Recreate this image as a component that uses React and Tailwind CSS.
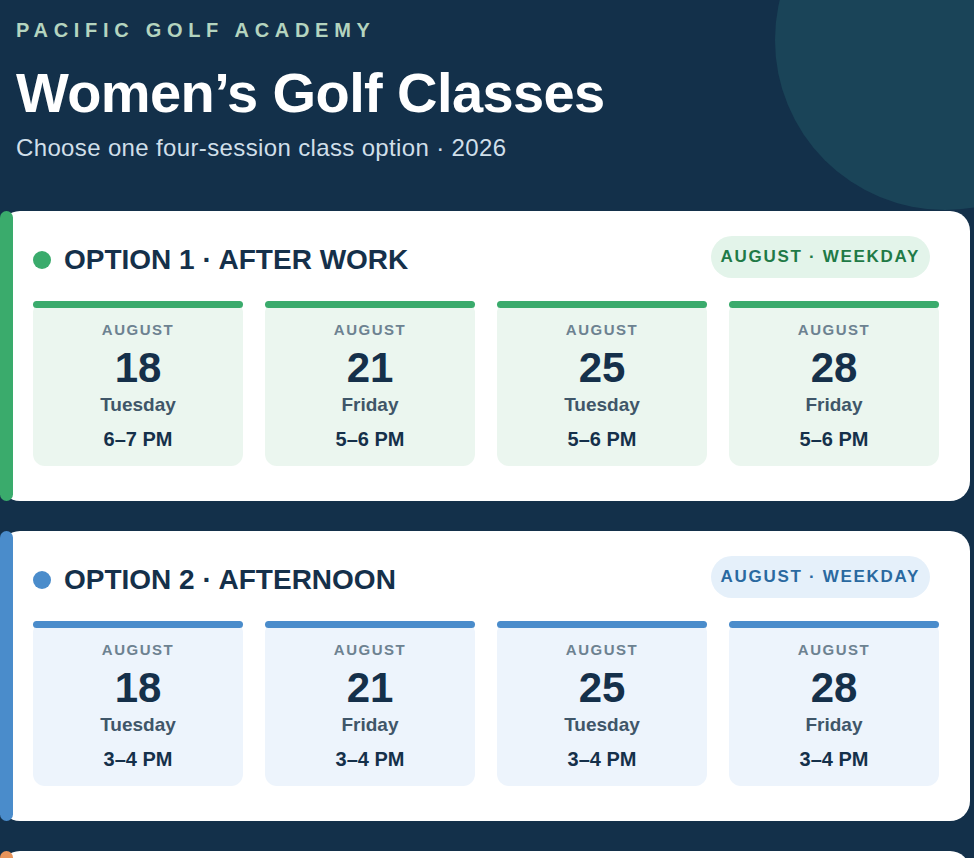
import React from "react";

const options = [
  {
    title: "OPTION 1 · AFTER WORK",
    badge: "AUGUST · WEEKDAY",
    bar: "bg-[#3aab6c]",
    tile: "bg-[#ebf6ef]",
    badgeCls: "bg-[#e3f4ea] text-[#1f7a47]",
    sessions: [
      { d: "18", day: "Tuesday", t: "6–7 PM" },
      { d: "21", day: "Friday", t: "5–6 PM" },
      { d: "25", day: "Tuesday", t: "5–6 PM" },
      { d: "28", day: "Friday", t: "5–6 PM" },
    ],
  },
  {
    title: "OPTION 2 · AFTERNOON",
    badge: "AUGUST · WEEKDAY",
    bar: "bg-[#4a8ccb]",
    tile: "bg-[#edf4fc]",
    badgeCls: "bg-[#e5f0fa] text-[#2a69a0]",
    sessions: [
      { d: "18", day: "Tuesday", t: "3–4 PM" },
      { d: "21", day: "Friday", t: "3–4 PM" },
      { d: "25", day: "Tuesday", t: "3–4 PM" },
      { d: "28", day: "Friday", t: "3–4 PM" },
    ],
  },
  {
    title: "OPTION 3 · WEEKEND",
    badge: "AUGUST · WEEKEND",
    bar: "bg-[#e8945a]",
    tile: "bg-[#fdf2ea]",
    badgeCls: "bg-[#fcefe4] text-[#b5622a]",
    sessions: [
      { d: "22", day: "Saturday", t: "9–10 AM" },
      { d: "23", day: "Sunday", t: "9–10 AM" },
      { d: "29", day: "Saturday", t: "9–10 AM" },
      { d: "30", day: "Sunday", t: "9–10 AM" },
    ],
  },
];

function Card({ o }) {
  return (
    <div className="relative w-[970px] rounded-[20px] bg-white pl-[33px] pr-[31px] pt-[25px] pb-[35px]">
      <div className={`absolute left-0 top-0 bottom-0 w-[13px] rounded-full ${o.bar}`} />
      <div className="flex items-start justify-between">
        <div className="mt-[7px] flex items-center gap-[13px]">
          <span className={`block h-[18px] w-[18px] rounded-full ${o.bar}`} />
          <h2 className="text-[28px] font-bold leading-[34px] text-[#15304a]">{o.title}</h2>
        </div>
        <div
          className={`mr-[9px] flex h-[42px] items-center rounded-full px-[10px] text-[17px] font-bold tracking-[0.1em] ${o.badgeCls}`}
        >
          {o.badge}
        </div>
      </div>
      <div className="mt-[23px] grid grid-cols-4 gap-[22px]">
        {o.sessions.map((s, i) => (
          <div key={i} className={`relative h-[165px] rounded-[12px] ${o.tile}`}>
            <div className={`absolute left-0 right-0 top-0 h-[7px] rounded-full ${o.bar}`} />
            <div className="flex flex-col items-center pt-[20px]">
              <div className="text-[15px] font-bold leading-[18px] tracking-[0.1em] text-[#6d8291]">AUGUST</div>
              <div className="mt-[8px] text-[42px] font-bold leading-[42px] text-[#15304a]">{s.d}</div>
              <div className="mt-[4px] text-[19px] font-bold leading-[24px] text-[#3f5669]">{s.day}</div>
              <div className="mt-[10px] text-[20px] font-bold leading-[24px] text-[#15304a]">{s.t}</div>
            </div>
          </div>
        ))}
      </div>
    </div>
  );
}

export default function App() {
  return (
    <div
      className="relative min-h-screen overflow-hidden bg-[#13304a] pb-10"
      style={{ fontFamily: '"Liberation Sans", Arial, sans-serif' }}
    >
      <div className="absolute left-[775px] top-[-130px] h-[340px] w-[340px] rounded-full bg-[#1a4458]" />
      <div className="relative">
        <header className="pl-4 pt-5">
          <div className="text-[20px] font-bold leading-5 tracking-[0.285em] text-[#b4d4bf]">PACIFIC GOLF ACADEMY</div>
          <h1 className="mt-[22px] text-[56px] font-bold leading-[1.1] tracking-[-0.6px] text-white">
            Women’s Golf Classes
          </h1>
          <p className="mt-[6px] text-[24px] leading-[36px] tracking-[0.36px] text-[#d0dfe9]">
            Choose one four-session class option · 2026
          </p>
        </header>
        <div className="mt-[45px] flex flex-col gap-[30px]">
          {options.map((o, i) => (
            <Card key={i} o={o} />
          ))}
        </div>
      </div>
    </div>
  );
}
